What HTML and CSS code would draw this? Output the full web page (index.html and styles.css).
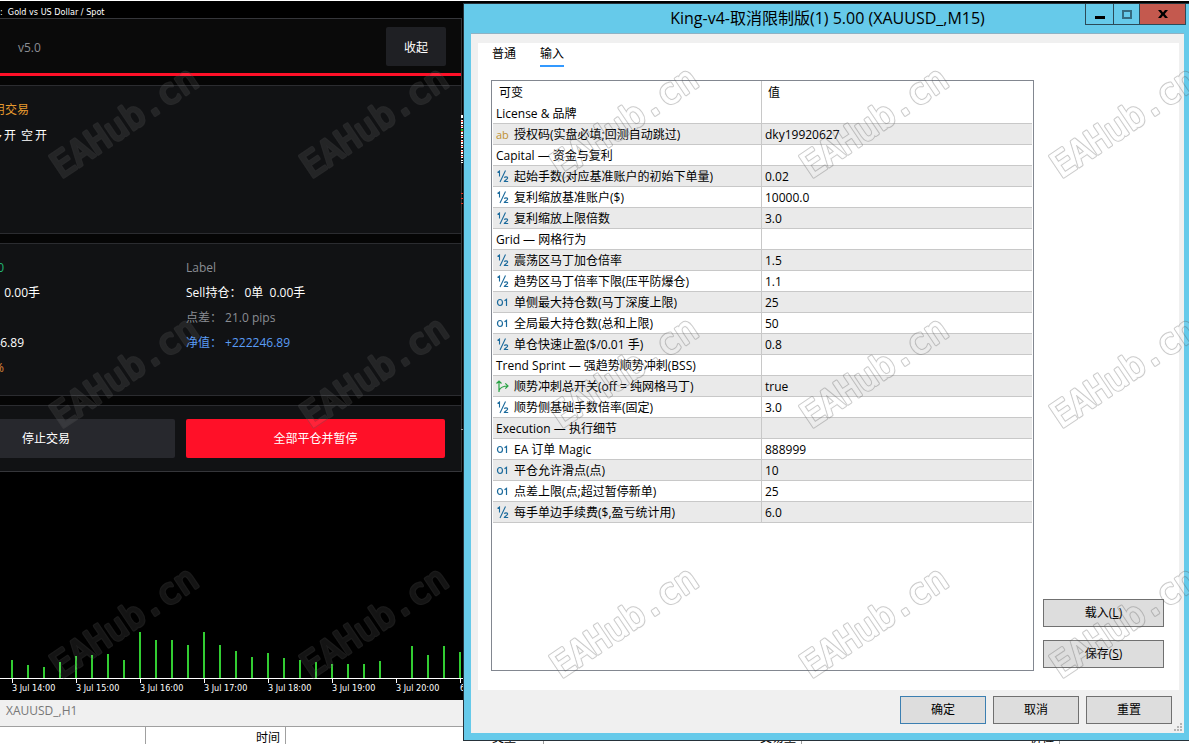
FILE: index.html
```html
<!DOCTYPE html>
<html lang="zh-CN">
<head>
<meta charset="utf-8">
<title>King-v4 XAUUSD_,M15</title>
<link rel="stylesheet" href="styles.css">
</head>
<body>
<div class="desktop">
  <main class="terminal">
    <section class="chart">
      <header class="chart-title">: &nbsp;Gold vs US Dollar / Spot</header>
      <div class="ea-panel">
        <div class="ea-head">
          <span class="version">v5.0</span>
          <button class="btn-collapse" type="button">收起</button>
        </div>
        <div class="card card-status">
          <p class="notice">启用交易</p>
          <p class="sides"><span>多</span><span>开</span><span class="side-next">空</span><span>开</span></p>
        </div>
        <div class="card card-stats">
          <div class="stats stats-buy">
            <p class="green end-a">0.0</p>
            <p class="end-d">0单 &nbsp;0.00手</p>
            <p></p>
            <p class="end-c">222246.89</p>
            <p class="orange end-a">0.0%</p>
          </div>
          <div class="stats">
            <p class="muted">Label</p>
            <p>Sell持仓： 0单 &nbsp;0.00手</p>
            <p class="muted">点差： 21.0 pips</p>
            <p class="blue">净值： +222246.89</p>
          </div>
        </div>
        <div class="card card-actions">
          <button class="btn-stop" type="button">停止交易</button>
          <button class="btn-close-all" type="button">全部平仓并暂停</button>
        </div>
      </div>
      <svg class="volumes" width="463" height="50" viewBox="0 630 463 50" aria-hidden="true">
        <path stroke="#32cd32" stroke-width="2" d="M12 660V678M28 665V678M44 667V678M60 662V678M76 656V678M92 655V678M108 654V678M124 660V678M140 632V678M156 640V678M172 640V678M188 645V678M204 632V678M220 645V678M236 651V678M252 657V678M268 653V678M284 658V678M300 660V678M316 662V678M332 664V678M348 664V678M364 664V678M380 661V678M412 646V678M428 655V678M444 646V678M460 652V678"/>
      </svg>
      <div class="time-axis">
        <span>3 Jul 14:00</span><span>3 Jul 15:00</span><span>3 Jul 16:00</span><span>3 Jul 17:00</span><span>3 Jul 18:00</span><span>3 Jul 19:00</span><span>3 Jul 20:00</span><span>6</span>
      </div>
      <svg class="candle-edge" width="2" height="320" viewBox="0 0 2 320" aria-hidden="true">
        <path stroke="#fff" stroke-width="2" stroke-dasharray="3 2 1 1 2 1" d="M1 0V48"/>
        <path stroke="#e03020" stroke-width="2" stroke-dasharray="1 4" d="M1 6V46M1 78V90"/>
        <path stroke="#22c022" stroke-width="2" d="M1 14v2"/>
        <path stroke="#999" stroke-width="2" d="M1 314v1"/>
      </svg>
    </section>
    <div class="chart-tabs">XAUUSD_,H1</div>
    <div class="trade-head">
      <span class="col-first"></span><span class="col-time">时间</span><span class="col-type">类型</span><span>交易量</span><span>价位</span><span></span>
    </div>
  </main>

  <section class="dialog" aria-labelledby="dialog-title">
    <header class="titlebar">
      <h1 id="dialog-title">King-v4-取消限制版(1) 5.00 (XAUUSD_,M15)</h1>
      <div class="window-buttons">
        <button type="button" class="win-min" aria-label="最小化"><svg width="10" height="13" viewBox="0 0 10 13"><path fill="#000" d="M0 8h10v3H0z"/></svg></button>
        <button type="button" class="win-max" aria-label="最大化"><svg width="10" height="9" viewBox="0 0 10 9"><path fill="none" stroke="#356b80" stroke-width="2" d="M1 1h8v7H1z"/></svg></button>
        <button type="button" class="win-close" aria-label="关闭"><svg width="10" height="8" viewBox="0 0 10 8"><path fill="#000" d="M0 0h3l2 2.500L7 0h3L6.700 4 10 8H7L5 5.500 3 8H0l3.300-4z"/></svg></button>
      </div>
    </header>
    <div class="client">
      <div class="page">
        <nav class="tabs"><button type="button">普通</button><button type="button" class="active">输入</button></nav>
        <div class="page-body">
          <div class="grid-box">
            <table class="params">
              <thead><tr><th>可变</th><th>值</th></tr></thead>
              <tbody>
                <tr><td>License &amp; 品牌</td><td></td></tr>
                <tr><td><i class="ic ic-str">ab</i>授权码(实盘必填;回测自动跳过)</td><td>dky19920627</td></tr>
                <tr><td>Capital — 资金与复利</td><td></td></tr>
                <tr><td><svg class="ic"><use href="#half"/></svg>起始手数(对应基准账户的初始下单量)</td><td>0.02</td></tr>
                <tr><td><svg class="ic"><use href="#half"/></svg>复利缩放基准账户($)</td><td>10000.0</td></tr>
                <tr><td><svg class="ic"><use href="#half"/></svg>复利缩放上限倍数</td><td>3.0</td></tr>
                <tr><td>Grid — 网格行为</td><td></td></tr>
                <tr><td><svg class="ic"><use href="#half"/></svg>震荡区马丁加仓倍率</td><td>1.5</td></tr>
                <tr><td><svg class="ic"><use href="#half"/></svg>趋势区马丁倍率下限(压平防爆仓)</td><td>1.1</td></tr>
                <tr><td><svg class="ic"><use href="#int"/></svg>单侧最大持仓数(马丁深度上限)</td><td>25</td></tr>
                <tr><td><svg class="ic"><use href="#int"/></svg>全局最大持仓数(总和上限)</td><td>50</td></tr>
                <tr><td><svg class="ic"><use href="#half"/></svg>单仓快速止盈($/0.01 手)</td><td>0.8</td></tr>
                <tr><td>Trend Sprint — 强趋势顺势冲刺(BSS)</td><td></td></tr>
                <tr><td><svg class="ic"><use href="#bool"/></svg>顺势冲刺总开关(off = 纯网格马丁)</td><td>true</td></tr>
                <tr><td><svg class="ic"><use href="#half"/></svg>顺势侧基础手数倍率(固定)</td><td>3.0</td></tr>
                <tr><td>Execution — 执行细节</td><td></td></tr>
                <tr><td><svg class="ic"><use href="#int"/></svg>EA 订单 Magic</td><td>888999</td></tr>
                <tr><td><svg class="ic"><use href="#int"/></svg>平仓允许滑点(点)</td><td>10</td></tr>
                <tr><td><svg class="ic"><use href="#int"/></svg>点差上限(点;超过暂停新单)</td><td>25</td></tr>
                <tr><td><svg class="ic"><use href="#half"/></svg>每手单边手续费($,盈亏统计用)</td><td>6.0</td></tr>
              </tbody>
            </table>
          </div>
          <div class="side-actions">
            <button type="button" class="btn">载入(<u>L</u>)</button>
            <button type="button" class="btn">保存(<u>S</u>)</button>
          </div>
        </div>
      </div>
      <footer class="dialog-actions">
        <button type="button" class="btn btn-default">确定</button>
        <button type="button" class="btn">取消</button>
        <button type="button" class="btn">重置</button>
      </footer>
      <svg class="grip" width="8" height="8" viewBox="0 0 8 8" aria-hidden="true"><path fill="#b4b4b4" d="M6 0h2v2H6zM3 3h2v2H3zM6 3h2v2H6zM0 6h2v2H0zM3 6h2v2H3zM6 6h2v2H6z"/></svg>
    </div>
  </section>

  <svg class="watermark" aria-hidden="true">
    <defs>
      <mask id="outline" maskUnits="userSpaceOnUse" x="0" y="0" width="250" height="250">
        <text transform="translate(61 179) rotate(-34)" class="mark-text mark-outer">EAHub.cn</text>
        <text transform="translate(61 179) rotate(-34)" class="mark-text mark-inner">EAHub.cn</text>
      </mask>
      <pattern id="mark" width="250" height="250" patternUnits="userSpaceOnUse">
        <g opacity="0.08"><text transform="translate(61 179) rotate(-34)" class="mark-text mark-body">EAHub.cn</text></g>
        <rect width="250" height="250" fill="#303030" fill-opacity="0.25" mask="url(#outline)"/>
      </pattern>
    </defs>
    <rect width="100%" height="690" fill="url(#mark)"/>
  </svg>

  <svg class="symbols" aria-hidden="true">
    <symbol id="half" viewBox="0 0 13 13"><path fill="none" stroke="#1b6a9c" stroke-width="1.100" d="M1.500 2.500L3.500 1v5.500M9.500 .5L4 12M8.300 7.800c.6-1.300 3.400-1.300 3.400.3C11.700 9.300 8.500 10.500 8.300 11.500h3.900"/></symbol>
    <symbol id="int" viewBox="0 0 13 13"><ellipse cx="4" cy="6.500" rx="2.500" ry="3" fill="none" stroke="#1b6a9c" stroke-width="1.200"/><path fill="none" stroke="#1b6a9c" stroke-width="1.200" d="M8.500 4.700l2-1.300V10"/></symbol>
    <symbol id="bool" viewBox="0 0 13 13"><path fill="none" stroke="#27a243" stroke-width="1.200" d="M3 12V1M.5 3.500L3 1l2.500 2.500M3 10.500C4.500 7 7 6 12 6M9.300 3.300L12 6 9.300 8.700"/></symbol>
  </svg>
</div>
</body>
</html>
```
FILE: styles.css
```css
* { box-sizing: border-box; }

body {
  margin: 0;
  font: 12px/16px "Open Sans", "Noto Sans CJK SC", sans-serif;
  color: #000;
  background: #fff;
}

p, h1 { margin: 0; }

button {
  font: inherit;
  color: inherit;
  padding: 0;
  border: 0;
  border-radius: 0;
  background: none;
}

.desktop {
  position: relative;
  height: 100vh;
  min-height: 620px;
  overflow: hidden;
}

/* Trading terminal behind the dialog */
.terminal {
  display: flex;
  flex-direction: column;
  height: 100%;
  border-top: 1px solid #fff;
}

.chart {
  position: relative;
  flex: 1;
  display: flex;
  flex-direction: column;
  background: #000;
  color: #fff;
}

.chart-title {
  height: 17px;
  padding-top: 3px;
  font: 9px/16px "DejaVu Sans Condensed", "DejaVu Sans", sans-serif;
}

.ea-panel {
  width: 482px;
  margin-left: -20px;
  background: #050505;
  border: 1px solid #35363a;
}

.ea-head {
  display: flex;
  align-items: center;
  justify-content: space-between;
  height: 57px;
  padding: 1px 15px 0 37px;
  background: #0a0a0a;
  border-bottom: 3px solid #ff1028;
}

.version { padding-top: 3px; }

.version, .muted { color: #8a8d93; }

.btn-collapse {
  width: 60px;
  height: 39px;
  padding-top: 2px;
  border-radius: 2px;
  background: #1f2024;
  color: #fff;
}

.card {
  margin-top: 9px;
  background: #111214;
  border-top: 1px solid #2b2c30;
  border-bottom: 1px solid #2b2c30;
}

.card:last-child { border-bottom: 0; }

.card-status {
  height: 149px;
  padding-top: 16px;
}

.notice { color: #e69a2e; }

.sides {
  display: flex;
  gap: 2px;
  margin: 10px 0 0 9px;
}

.side-next { margin-left: 3px; }

.card-stats {
  display: grid;
  grid-template-columns: 205px 1fr;
  height: 153px;
  padding-top: 12px;
}

.stats {
  display: grid;
  grid-template-rows: repeat(5, 25px);
  line-height: 24px;
  white-space: nowrap;
}

.stats-buy { justify-items: start; }

.stats-buy p {
  display: flex;
  justify-content: flex-end;
}

.end-a { width: 23px; }
.end-c { width: 43px; }
.end-d { width: 59px; }

.green { color: #22b573; }
.orange { color: #e08a3a; }
.blue { color: #5a9cf5; }

.card-actions {
  display: grid;
  grid-template-columns: 194px 1fr;
  gap: 11px;
  padding: 13px 16px 13px 0;
}

.btn-stop, .btn-close-all {
  height: 39px;
  border-radius: 2px;
}

.btn-stop {
  padding-right: 105px;
  background: #27282d;
  text-align: right;
}

.btn-close-all { background: #ff1028; }

.volumes {
  display: block;
  margin-top: auto;
  height: 50px;
}

.time-axis {
  display: flex;
  width: 463px;
  height: 22px;
  margin-top: -2px;
  padding-left: 12px;
  overflow: hidden;
  border-top: 1px solid #fff;
  font: 9px/16px "DejaVu Sans Condensed", "DejaVu Sans", sans-serif;
}

.time-axis span {
  flex: 0 0 64px;
  white-space: nowrap;
}

.time-axis span::before {
  content: "";
  display: block;
  width: 1px;
  height: 4px;
  margin-bottom: -3px;
  background: #fff;
}

.candle-edge {
  position: absolute;
  left: 461px;
  top: 114px;
}

.chart-tabs {
  height: 26px;
  padding: 3px 6px;
  background: #f0f0f0;
  color: #777;
}

.trade-head {
  display: flex;
  height: 18px;
  overflow: hidden;
  border-top: 1px solid #a0a0a0;
  line-height: 22px;
  text-align: right;
}

.trade-head span {
  flex: 0 0 258px;
  padding-right: 5px;
  border-right: 1px solid #a0a0a0;
}

.trade-head .col-first { flex-basis: 146px; }
.trade-head .col-time { flex-basis: 140px; }
.trade-head .col-type { padding-right: 27px; }

/* Expert properties dialog */
.dialog {
  position: absolute;
  left: 463px;
  right: 0;
  top: 3px;
  bottom: 3px;
  display: flex;
  flex-direction: column;
  padding: 0 5px 7px 7px;
  background: #66caea;
  border: 1px solid #26323a;
  border-right: 0;
}

.titlebar {
  position: relative;
  height: 29px;
}

.titlebar h1 {
  font-size: 16px;
  font-weight: 400;
  line-height: 29px;
  text-align: center;
}

.window-buttons {
  position: absolute;
  right: -2px;
  top: 0;
  display: flex;
  height: 21px;
  border: 1px solid #2b4a58;
  border-top: 0;
}

.window-buttons button {
  display: flex;
  align-items: center;
  justify-content: center;
  border-right: 1px solid #2b4a58;
}

.window-buttons .win-min { width: 28px; }
.window-buttons .win-max { width: 26px; }
.window-buttons .win-close { width: 45px; border-right: 0; background: #c4594e; }

.client {
  position: relative;
  flex: 1;
  display: flex;
  flex-direction: column;
  padding: 9px 5px 9px 7px;
  background: #f0f0f0;
  border-top: 1px solid #8fb2c4;
}

.page {
  flex: 1;
  display: flex;
  flex-direction: column;
  padding: 2px 15px 19px 13px;
  background: #fff;
}

.tabs {
  display: flex;
  gap: 24px;
  padding-left: 1px;
  margin-bottom: 13px;
}

.tabs button {
  height: 22px;
  padding-bottom: 2px;
  border-bottom: 2px solid transparent;
}

.tabs .active { border-color: #3399ff; }

.page-body {
  flex: 1;
  display: flex;
  gap: 9px;
}

.grid-box {
  flex: 1;
  padding: 0 1px;
  border: 1px solid #828790;
}

.params {
  width: 100%;
  table-layout: fixed;
  border-collapse: separate;
  border-spacing: 0;
}

.params th {
  height: 22px;
  padding: 2px 6px 0;
  font-weight: 400;
  text-align: left;
}

.params th:first-child { width: 269px; }

.params td {
  height: 21px;
  padding: 2px 3px 0;
  border-bottom: 1px solid #c8c8c8;
  white-space: nowrap;
}

.params th:first-child,
.params td:first-child { border-right: 1px solid #c8c8c8; }

.params tbody tr:nth-child(even) { background: #eaeaea; }

.ic {
  display: inline-block;
  width: 13px;
  height: 13px;
  margin-right: 5px;
  vertical-align: -2px;
}

.ic-str {
  color: #c09030;
  font-size: 11px;
  font-style: normal;
  line-height: 13px;
  vertical-align: 0;
}

.side-actions {
  display: flex;
  flex-direction: column;
  justify-content: flex-end;
  gap: 13px;
  width: 121px;
  padding-bottom: 3px;
}

.btn {
  height: 28px;
  background: #ddd;
  border: 1px solid #707070;
}

.btn-default { border-color: #3c7fb1; }

.dialog-actions {
  display: flex;
  justify-content: flex-end;
  gap: 7px;
  padding: 6px 7px 0 0;
}

.dialog-actions .btn { width: 86px; }

.grip {
  position: absolute;
  right: 2px;
  bottom: 2px;
}

.watermark {
  position: absolute;
  inset: 0;
  width: 100%;
  height: 100%;
  pointer-events: none;
}

.mark-text {
  font: 35px "DejaVu Sans Mono", monospace;
  stroke-linejoin: round;
}

.mark-body, .mark-outer {
  fill: #fff;
  stroke: #fff;
  stroke-width: 3px;
}

.mark-inner {
  fill: #000;
  stroke: #000;
  stroke-width: 1px;
}

.symbols {
  position: absolute;
  width: 0;
  height: 0;
}
```
